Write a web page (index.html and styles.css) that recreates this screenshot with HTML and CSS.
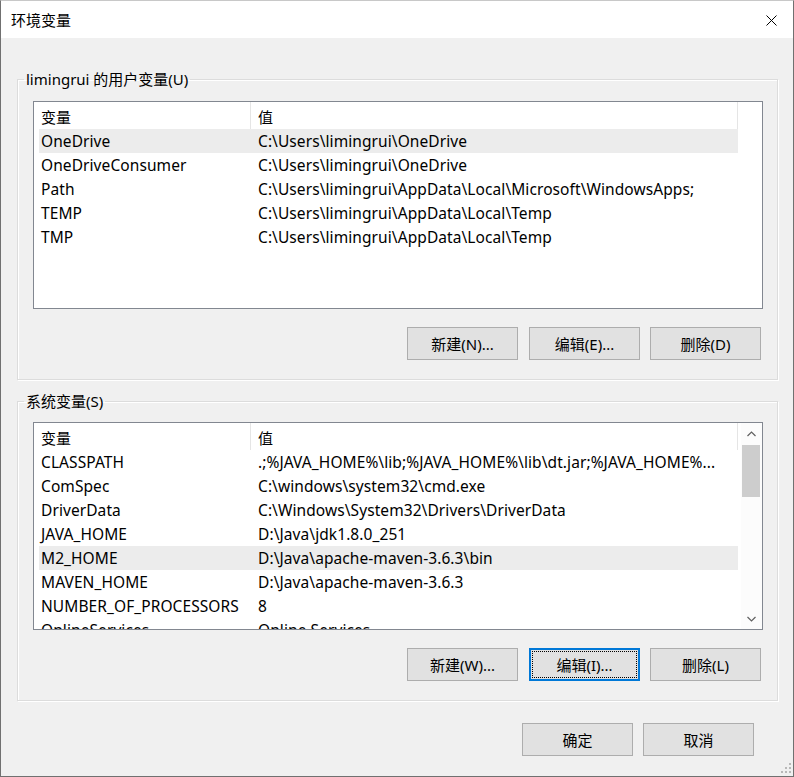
FILE: index.html
```html
<!DOCTYPE html>
<html lang="zh-CN">
<head>
    <meta charset="UTF-8">
    <meta name="viewport" content="width=device-width, initial-scale=1.0">
    <title>环境变量</title>
    <link rel="stylesheet" href="styles.css">
</head>
<body>
    <div class="window">
        <div class="titlebar">
            <span class="title">环境变量</span>
            <span class="close">
                <svg width="11" height="11" viewBox="0 0 11 11"><path d="M0.5 0.5L10.5 10.5M10.5 0.5L0.5 10.5" stroke="#000" stroke-width="1"/></svg>
            </span>
        </div>

        <div class="content">
            <fieldset class="group">
                <legend>limingrui 的用户变量(U)</legend>
                <div class="listbox">
                    <div class="list-main">
                        <div class="list-head">
                            <div class="cell name">变量</div>
                            <div class="cell value">值</div>
                        </div>
                        <div class="row hot"><div class="cell name">OneDrive</div><div class="cell value">C:\Users\limingrui\OneDrive</div></div>
                        <div class="row"><div class="cell name">OneDriveConsumer</div><div class="cell value">C:\Users\limingrui\OneDrive</div></div>
                        <div class="row"><div class="cell name">Path</div><div class="cell value">C:\Users\limingrui\AppData\Local\Microsoft\WindowsApps;</div></div>
                        <div class="row"><div class="cell name">TEMP</div><div class="cell value">C:\Users\limingrui\AppData\Local\Temp</div></div>
                        <div class="row"><div class="cell name">TMP</div><div class="cell value">C:\Users\limingrui\AppData\Local\Temp</div></div>
                    </div>
                </div>
                <div class="actions">
                    <button class="btn">新建(N)...</button>
                    <button class="btn">编辑(E)...</button>
                    <button class="btn">删除(D)</button>
                </div>
            </fieldset>

            <fieldset class="group">
                <legend>系统变量(S)</legend>
                <div class="listbox">
                    <div class="list-main">
                        <div class="list-head">
                            <div class="cell name">变量</div>
                            <div class="cell value">值</div>
                        </div>
                        <div class="row"><div class="cell name">CLASSPATH</div><div class="cell value">.;%JAVA_HOME%\lib;%JAVA_HOME%\lib\dt.jar;%JAVA_HOME%...</div></div>
                        <div class="row"><div class="cell name">ComSpec</div><div class="cell value">C:\windows\system32\cmd.exe</div></div>
                        <div class="row"><div class="cell name">DriverData</div><div class="cell value">C:\Windows\System32\Drivers\DriverData</div></div>
                        <div class="row"><div class="cell name">JAVA_HOME</div><div class="cell value">D:\Java\jdk1.8.0_251</div></div>
                        <div class="row hot"><div class="cell name">M2_HOME</div><div class="cell value">D:\Java\apache-maven-3.6.3\bin</div></div>
                        <div class="row"><div class="cell name">MAVEN_HOME</div><div class="cell value">D:\Java\apache-maven-3.6.3</div></div>
                        <div class="row"><div class="cell name">NUMBER_OF_PROCESSORS</div><div class="cell value">8</div></div>
                        <div class="row"><div class="cell name">OnlineServices</div><div class="cell value">Online Services</div></div>
                    </div>
                    <div class="scrollbar">
                        <span class="arrow">
                            <svg width="9" height="6" viewBox="0 0 9 6"><path d="M0.5 5L4.5 1L8.5 5" fill="none" stroke="#606060" stroke-width="1.2"/></svg>
                        </span>
                        <span class="thumb"></span>
                        <span class="track"></span>
                        <span class="arrow">
                            <svg width="9" height="6" viewBox="0 0 9 6"><path d="M0.5 1L4.5 5L8.5 1" fill="none" stroke="#606060" stroke-width="1.2"/></svg>
                        </span>
                    </div>
                </div>
                <div class="actions">
                    <button class="btn">新建(W)...</button>
                    <button class="btn focused">编辑(I)...</button>
                    <button class="btn">删除(L)</button>
                </div>
            </fieldset>

            <div class="dialog-actions">
                <button class="btn">确定</button>
                <button class="btn">取消</button>
            </div>
        </div>

        <span class="grip">
            <svg width="10" height="10" viewBox="0 0 10 10" fill="#b8b8b8">
                <rect x="8" y="0" width="2" height="2"/>
                <rect x="4" y="4" width="2" height="2"/>
                <rect x="8" y="4" width="2" height="2"/>
                <rect x="0" y="8" width="2" height="2"/>
                <rect x="4" y="8" width="2" height="2"/>
                <rect x="8" y="8" width="2" height="2"/>
            </svg>
        </span>
    </div>
</body>
</html>
```

FILE: styles.css
```css
body {
    margin: 0;
    padding: 0;
    font-family: "Noto Sans", "Noto Sans CJK SC", sans-serif;
    font-size: 15px;
    color: #000;
}

.window {
    position: relative;
    width: 794px;
    height: 777px;
    box-sizing: border-box;
    border: 1px solid #707070;
    border-top-color: #c8c8c8;
    background-color: #f0f0f0;
    overflow: hidden;
}

.titlebar {
    height: 37px;
    background-color: #fff;
    display: flex;
    align-items: center;
    justify-content: space-between;
    padding: 0 16px 0 10px;
}

.title {
    font-family: "Noto Sans CJK SC", sans-serif;
    font-size: 15px;
}

.close {
    display: flex;
    margin-top: 1px;
}

.content {
    padding: 0 15px 0 16px;
}

.group {
    margin: 0;
    margin-top: 11px;
    padding: 11px 14px 19px 15px;
    border: 1px solid #dcdcdc;
    box-shadow: inset 1px 1px 0 #fff, 1px 1px 0 #fff;
}

.group:first-child {
    margin-top: 31px;
    padding-top: 12px;
}

.group legend {
    margin-left: -9px;
    padding: 0 2px;
    line-height: 20px;
}

.listbox {
    display: flex;
    height: 208px;
    box-sizing: border-box;
    border: 1px solid #828790;
    background-color: #fff;
    overflow: hidden;
}

.list-main {
    flex: 1;
    padding-left: 5px;
}

.list-head {
    display: flex;
    height: 27px;
    line-height: 29px;
}

.list-head .cell {
    font-family: "Noto Sans CJK SC", sans-serif;
}

.list-head .name {
    border-right: 1px solid #e5e5e5;
    box-sizing: border-box;
}

.list-head .value {
    border-right: 1px solid #e5e5e5;
    box-sizing: border-box;
    width: 488px;
}

.row {
    display: flex;
    width: 699px;
    height: 24px;
    line-height: 24px;
    font-size: 15.5px;
    letter-spacing: 0.08px;
}

.row.hot {
    background-color: #ececec;
}

.cell {
    white-space: nowrap;
    overflow: hidden;
    text-overflow: ellipsis;
}

.cell.name {
    width: 212px;
    padding-left: 2px;
    box-sizing: border-box;
}

.cell.value {
    width: 487px;
    padding: 0 5px 0 7px;
    box-sizing: border-box;
}

.scrollbar {
    width: 21px;
    display: flex;
    flex-direction: column;
    background-color: #fcfcfc;
}

.scrollbar .arrow {
    height: 21px;
    display: flex;
    align-items: center;
    justify-content: center;
}

.scrollbar .thumb {
    height: 52px;
    margin: 1px 2px 0 1px;
    background-color: #cdcdcd;
}

.scrollbar .track {
    flex: 1;
}

.actions {
    display: flex;
    justify-content: flex-end;
    gap: 10px;
    margin-top: 18px;
    padding-right: 2px;
}

.actions .btn:first-child {
    margin-right: 1px;
}

.btn {
    width: 111px;
    height: 33px;
    padding: 0;
    border: 1px solid #adadad;
    background-color: #e1e1e1;
    font-family: "Noto Sans", "Noto Sans CJK SC", sans-serif;
    font-size: 15px;
    color: #000;
}

.btn.focused {
    border: 2px solid #0078d7;
    outline: 1px dotted #000;
    outline-offset: -4px;
}

.dialog-actions {
    display: flex;
    justify-content: flex-end;
    gap: 10px;
    margin-top: 22px;
    padding-right: 24px;
}

.grip {
    position: absolute;
    right: 2px;
    bottom: 3px;
    display: flex;
}
```
